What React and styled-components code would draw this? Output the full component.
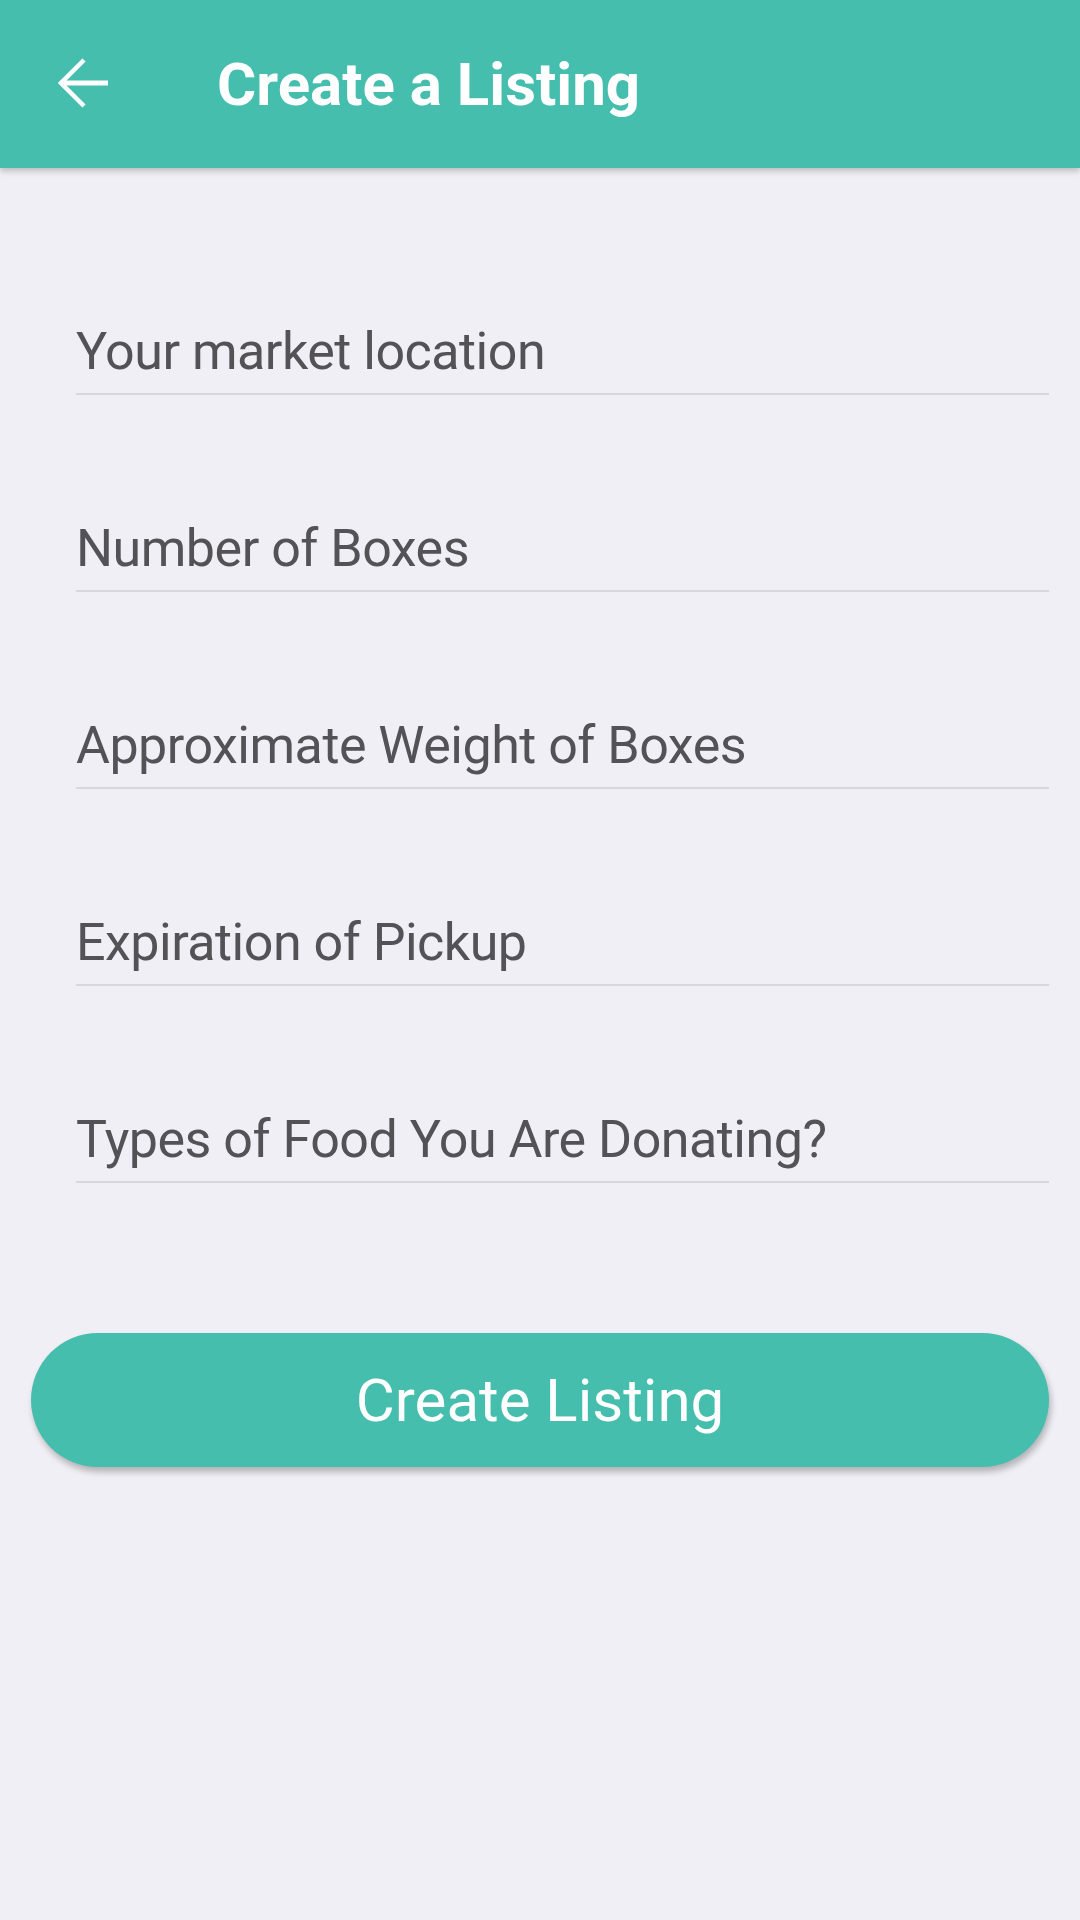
import React from 'react'
import styled, { createGlobalStyle } from 'styled-components'

const GlobalStyle = createGlobalStyle`
    body {
        margin: 0;
        background-color: #f0eff5;
        font-family: Roboto, "Noto Sans", sans-serif;
    }
`

const fields = [
    'Your market location',
    'Number of Boxes',
    'Approximate Weight of Boxes',
    'Expiration of Pickup',
    'Types of Food You Are Donating?',
]

function BackArrow() {
    return (
        <svg width="52" height="52" viewBox="0 0 52 52" fill="none">
            <path d="M50 25H4" stroke="#ffffff" strokeWidth="5" />
            <path d="M26 2L3 25L26 48" stroke="#ffffff" strokeWidth="4.5" />
        </svg>
    )
}

function App() {
    return (
        <Page>
            <GlobalStyle />
            <Header>
                <BackButton>
                    <BackArrow />
                </BackButton>
                <Title>Create a Listing</Title>
            </Header>
            <Form>
                {fields.map((label) => (
                    <Field key={label}>
                        <Label>{label}</Label>
                    </Field>
                ))}
            </Form>
            <SubmitButton>Create Listing</SubmitButton>
        </Page>
    )
}

export default App

const Page = styled.div`
    min-height: 1920px;
    background-color: #f0eff5;
    display: flex;
    flex-direction: column;
`

const Header = styled.header`
    height: 168px;
    background-color: #45bead;
    display: flex;
    align-items: center;
    box-shadow: 0 3px 6px rgba(0, 0, 0, 0.22);
    position: relative;
    z-index: 1;
`

const BackButton = styled.div`
    width: 52px;
    height: 52px;
    margin-left: 58px;
    margin-right: 107px;
    display: flex;
`

const Title = styled.h1`
    margin: 0;
    color: #ffffff;
    font-size: 60px;
    font-weight: 700;
    letter-spacing: 0;
`

const Form = styled.div`
    display: flex;
    flex-direction: column;
    gap: 122px;
    padding: 152px 31px 0 76px;
`

const Field = styled.div`
    border-bottom: 2px solid #d9d6de;
    padding-bottom: 9px;
`

const Label = styled.div`
    font-size: 52px;
    line-height: 64px;
    letter-spacing: -0.5px;
    color: #535257;
`

const SubmitButton = styled.button`
    margin: 150px 31px 0 31px;
    height: 134px;
    border: none;
    border-radius: 67px;
    background-color: #45bead;
    color: #ffffff;
    font-family: Roboto, "Noto Sans", sans-serif;
    font-size: 60px;
    font-weight: 400;
    box-shadow: 2px 5px 6px rgba(0, 0, 0, 0.25);
    cursor: pointer;
`
